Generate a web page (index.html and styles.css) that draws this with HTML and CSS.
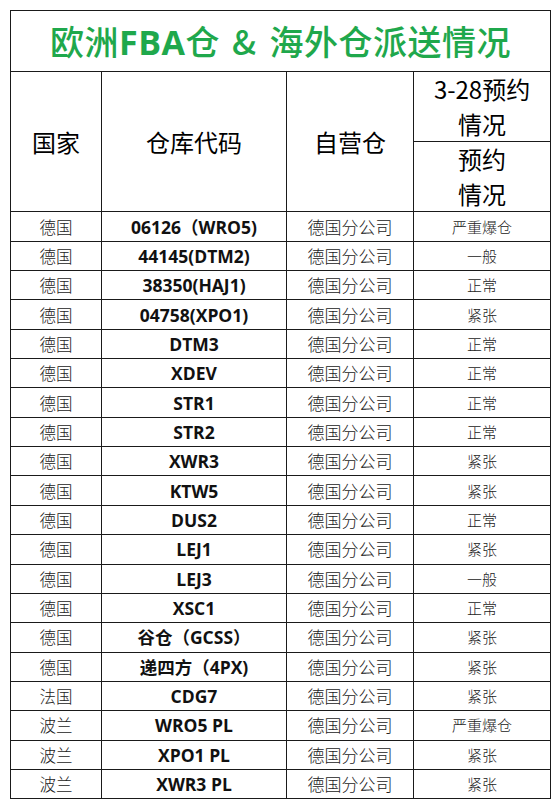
FILE: index.html
```html
<!DOCTYPE html>
<html lang="zh-CN">
<head>
<meta charset="utf-8">
<title>欧洲FBA仓 &amp; 海外仓派送情况</title>
<link rel="stylesheet" href="styles.css">
</head>
<body>
<div class="page">
<table class="sheet">
  <colgroup>
    <col class="c1"><col class="c2"><col class="c3"><col class="c4">
  </colgroup>
  <thead>
    <tr class="title-row"><th colspan="4" class="title">欧洲<span class="latin">FBA</span>仓<span class="amp">&amp;</span>海外仓派送情况</th></tr>
    <tr class="head-row">
      <th rowspan="2" class="head">国家</th>
      <th rowspan="2" class="head">仓库代码</th>
      <th rowspan="2" class="head">自营仓</th>
      <th class="head sub"><span class="ln">3-28预约</span><span class="ln">情况</span></th>
    </tr>
    <tr class="head-row">
      <th class="head sub"><span class="ln">预约</span><span class="ln">情况</span></th>
    </tr>
  </thead>
  <tbody>
    <tr><td class="country">德国</td><td class="code">06126（WRO5)</td><td class="own">德国分公司</td><td class="status">严重爆仓</td></tr>
    <tr><td class="country">德国</td><td class="code">44145(DTM2)</td><td class="own">德国分公司</td><td class="status">一般</td></tr>
    <tr><td class="country">德国</td><td class="code">38350(HAJ1)</td><td class="own">德国分公司</td><td class="status">正常</td></tr>
    <tr><td class="country">德国</td><td class="code">04758(XPO1)</td><td class="own">德国分公司</td><td class="status">紧张</td></tr>
    <tr><td class="country">德国</td><td class="code">DTM3</td><td class="own">德国分公司</td><td class="status">正常</td></tr>
    <tr><td class="country">德国</td><td class="code">XDEV</td><td class="own">德国分公司</td><td class="status">正常</td></tr>
    <tr><td class="country">德国</td><td class="code">STR1</td><td class="own">德国分公司</td><td class="status">正常</td></tr>
    <tr><td class="country">德国</td><td class="code">STR2</td><td class="own">德国分公司</td><td class="status">正常</td></tr>
    <tr><td class="country">德国</td><td class="code">XWR3</td><td class="own">德国分公司</td><td class="status">紧张</td></tr>
    <tr><td class="country">德国</td><td class="code">KTW5</td><td class="own">德国分公司</td><td class="status">紧张</td></tr>
    <tr><td class="country">德国</td><td class="code">DUS2</td><td class="own">德国分公司</td><td class="status">正常</td></tr>
    <tr><td class="country">德国</td><td class="code">LEJ1</td><td class="own">德国分公司</td><td class="status">紧张</td></tr>
    <tr><td class="country">德国</td><td class="code">LEJ3</td><td class="own">德国分公司</td><td class="status">一般</td></tr>
    <tr><td class="country">德国</td><td class="code">XSC1</td><td class="own">德国分公司</td><td class="status">正常</td></tr>
    <tr><td class="country">德国</td><td class="code">谷仓（GCSS）</td><td class="own">德国分公司</td><td class="status">紧张</td></tr>
    <tr><td class="country">德国</td><td class="code">递四方（4PX)</td><td class="own">德国分公司</td><td class="status">紧张</td></tr>
    <tr><td class="country">法国</td><td class="code">CDG7</td><td class="own">德国分公司</td><td class="status">紧张</td></tr>
    <tr><td class="country">波兰</td><td class="code">WRO5 PL</td><td class="own">德国分公司</td><td class="status">严重爆仓</td></tr>
    <tr><td class="country">波兰</td><td class="code">XPO1 PL</td><td class="own">德国分公司</td><td class="status">紧张</td></tr>
    <tr><td class="country">波兰</td><td class="code">XWR3 PL</td><td class="own">德国分公司</td><td class="status">紧张</td></tr>
  </tbody>
</table>
</div>
</body>
</html>
```

FILE: styles.css
```css
html, body {
  margin: 0;
  padding: 0;
  background: #ffffff;
}
.page {
  padding: 10px 0 0 10px;
}
.sheet {
  border-collapse: collapse;
  table-layout: fixed;
  width: 540px;
  font-family: "Open Sans", "Noto Sans CJK SC", sans-serif;
  color: #111;
}
.c1 { width: 91px; }
.c2 { width: 185px; }
.c3 { width: 127px; }
.c4 { width: 137px; }
.sheet th, .sheet td {
  border: 1px solid #1a1a1a;
  padding: 0;
  text-align: center;
  vertical-align: middle;
}
.title-row { height: 61px; }
.title {
  font-family: "Noto Sans CJK SC", sans-serif;
  font-size: 34px;
  font-weight: 500;
  color: #1fa84c;
  line-height: 40px;
  letter-spacing: 0.5px;
}
.latin {
  font-family: "Open Sans", "Noto Sans CJK SC", sans-serif;
  font-weight: 700;
  letter-spacing: 0.5px;
}
.amp {
  display: inline-block;
  margin: 0 13px 0 12px;
  font-family: "Noto Sans CJK SC", sans-serif;
  font-weight: 500;
}
.head-row { height: 70px; }
.head {
  font-family: "Noto Sans CJK SC", sans-serif;
  font-size: 24px;
  font-weight: 400;
  color: #000;
  line-height: 31px;
}
.ln {
  display: block;
  height: 34.6px;
  line-height: 34.6px;
}
.sheet tbody tr { height: 29.35px; }
.country, .own {
  font-family: "Noto Sans CJK SC", sans-serif;
  font-size: 16.5px;
  font-weight: 300;
  color: #222;
  line-height: 20px;
}
.own { font-size: 17px; }
.code {
  font-family: "Open Sans", "Noto Sans CJK SC", sans-serif;
  font-size: 17.5px;
  font-weight: 700;
  color: #111;
  line-height: 20px;
}
.status {
  font-family: "Noto Sans CJK SC", sans-serif;
  font-size: 15px;
  font-weight: 300;
  color: #222;
  line-height: 20px;
}
```
